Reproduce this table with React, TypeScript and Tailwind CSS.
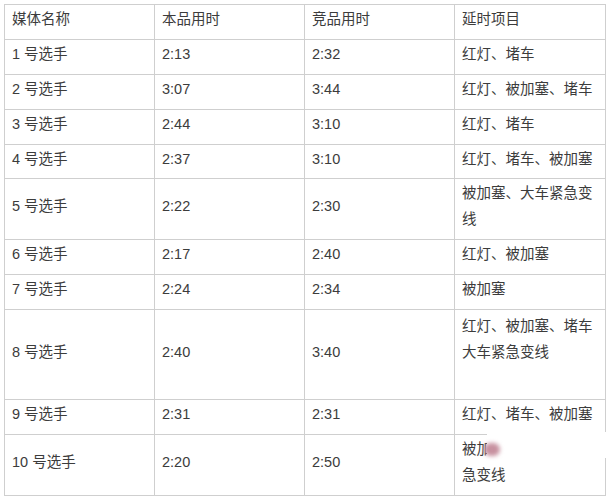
import React from "react";

type Row = {
  name: string;
  own: string;
  rival: string;
  delay: React.ReactNode;
  h: string;
};

const rows: Row[] = [
  { name: "1 号选手", own: "2:13", rival: "2:32", delay: "红灯、堵车", h: "h-[35px]" },
  { name: "2 号选手", own: "3:07", rival: "3:44", delay: "红灯、被加塞、堵车", h: "h-[35px]" },
  { name: "3 号选手", own: "2:44", rival: "3:10", delay: "红灯、堵车", h: "h-[35px]" },
  { name: "4 号选手", own: "2:37", rival: "3:10", delay: "红灯、堵车、被加塞", h: "h-[34px]" },
  { name: "5 号选手", own: "2:22", rival: "2:30", delay: "被加塞、大车紧急变线", h: "h-[61px]" },
  { name: "6 号选手", own: "2:17", rival: "2:40", delay: "红灯、被加塞", h: "h-[35px]" },
  { name: "7 号选手", own: "2:24", rival: "2:34", delay: "被加塞", h: "h-[35px]" },
  {
    name: "8 号选手",
    own: "2:40",
    rival: "3:40",
    delay: (
      <>
        红灯、被加塞、堵车
        <br />
        大车紧急变线
        <br />
        &nbsp;
      </>
    ),
    h: "h-[90px]",
  },
  { name: "9 号选手", own: "2:31", rival: "2:31", delay: "红灯、堵车、被加塞", h: "h-[35px]" },
  {
    name: "10 号选手",
    own: "2:20",
    rival: "2:50",
    delay: (
      <>
        被加
        <br />
        急变线
      </>
    ),
    h: "h-[61px]",
  },
];

const cell = "border border-[#cfcfcf] pl-[7px] pr-2 pt-0 pb-[6px] align-middle text-left font-normal";

export default function App() {
  return (
    <div
      className="relative w-[608px] h-[499px] bg-white pt-1 pl-1 text-[14.5px] leading-[26px] text-[#3c3c3c]"
      style={{ fontFamily: '"Liberation Sans", "Noto Sans CJK SC", sans-serif' }}
    >
      <table className="border-collapse table-fixed w-[601px]">
        <colgroup>
          <col className="w-[150px]" />
          <col className="w-[150px]" />
          <col className="w-[150px]" />
          <col className="w-[151px]" />
        </colgroup>
        <thead>
          <tr className="h-[35px]">
            <th className={cell}>媒体名称</th>
            <th className={cell}>本品用时</th>
            <th className={cell}>竞品用时</th>
            <th className={cell}>延时项目</th>
          </tr>
        </thead>
        <tbody>
          {rows.map((r) => (
            <tr key={r.name} className={r.h}>
              <td className={cell}>{r.name}</td>
              <td className={cell}>{r.own}</td>
              <td className={cell}>{r.rival}</td>
              <td className={cell}>{r.delay}</td>
            </tr>
          ))}
        </tbody>
      </table>

      {/* watermark smudge over the last cell */}
      <div className="absolute left-[487px] top-[432px] w-[121px] h-[26px] bg-white" />
      <div className="absolute left-[484px] top-[443px] w-[16px] h-[13px] rounded-full bg-[#c7909f] blur-[2px]" />
    </div>
  );
}
